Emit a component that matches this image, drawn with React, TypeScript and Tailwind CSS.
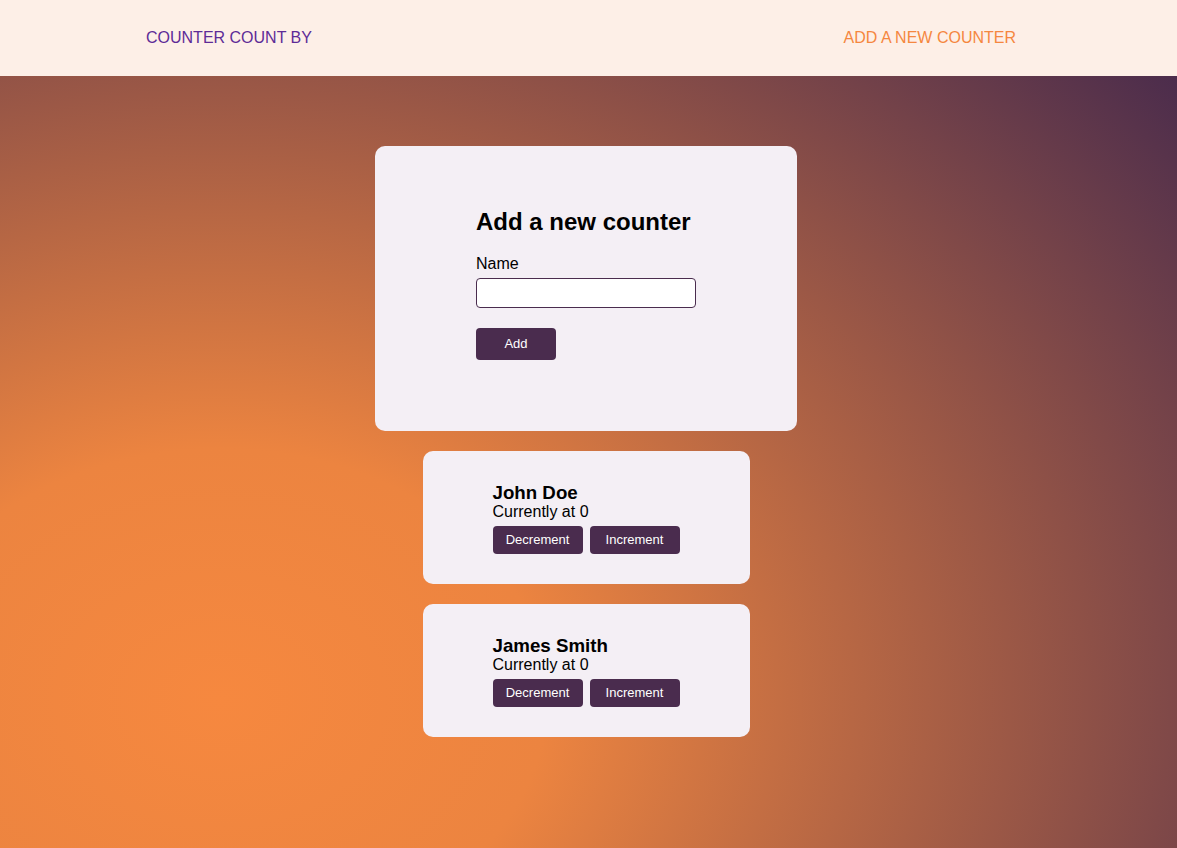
import React from "react";

function CounterCard({ name }: { name: string }) {
  return (
    <div className="w-[327px] h-[133px] rounded-[10px] bg-[#f4eff5] pl-[70px] pt-[31px]">
      <h3 className="text-[18.72px] font-bold leading-[21px] text-black">{name}</h3>
      <p className="text-[16px] leading-[18px] text-black">Currently at 0</p>
      <div className="mt-[5px] flex gap-[7px]">
        <button className="w-[90px] h-[28px] rounded-[4px] bg-[#4a2c4e] text-[13px] text-white">Decrement</button>
        <button className="w-[90px] h-[28px] rounded-[4px] bg-[#4a2c4e] text-[13px] text-white">Increment</button>
      </div>
    </div>
  );
}

export default function App() {
  return (
    <div className="min-h-[848px] font-['Liberation_Sans',Arial,sans-serif]">
      <header className="h-[76px] bg-[#fdefe7] flex items-center justify-between pl-[146px] pr-[161px] text-[16px]">
        <span className="text-[#5e2b97]">COUNTER COUNT BY</span>
        <span className="text-[#f5873f]">ADD A NEW COUNTER</span>
      </header>
      <main className="min-h-[772px] bg-[radial-gradient(ellipse_1256px_966px_at_220px_624px,#f6883f_0%,#ec8440_26%,#4b2c4c_100%)] flex flex-col items-center pt-[70px] pr-[5px] gap-[20px]">
        <div className="w-[422px] h-[285px] rounded-[10px] bg-[#f4eff5] px-[101px] pt-[62px]">
          <h2 className="text-[24px] font-bold leading-[27px] text-black">Add a new counter</h2>
          <label className="block mt-[20px] text-[16px] leading-[18px] text-black">Name</label>
          <input className="block mt-[5px] w-[220px] h-[30px] rounded-[4px] border border-[#4a2c4e] bg-white" />
          <button className="block mt-[20px] w-[80px] h-[32px] rounded-[4px] bg-[#4a2c4e] text-[13px] text-white">Add</button>
        </div>
        <CounterCard name="John Doe" />
        <CounterCard name="James Smith" />
      </main>
    </div>
  );
}
